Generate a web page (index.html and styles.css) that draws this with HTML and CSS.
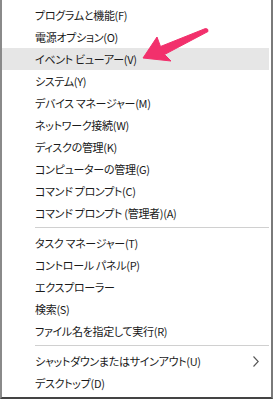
FILE: index.html
```html
<!DOCTYPE html>
<html lang="ja">
<head>
<meta charset="utf-8">
<link rel="stylesheet" href="styles.css">
</head>
<body>
<div class="menu">
  <ul class="list">
    <li class="item">プログラムと機能(F)</li>
    <li class="item">電源オプション(O)</li>
    <li class="item active">イベント ビューアー(V)</li>
    <li class="item">システム(Y)</li>
    <li class="item">デバイス マネージャー(M)</li>
    <li class="item">ネットワーク接続(W)</li>
    <li class="item">ディスクの管理(K)</li>
    <li class="item">コンピューターの管理(G)</li>
    <li class="item">コマンド プロンプト(C)</li>
    <li class="item">コマンド プロンプト (管理者)(A)</li>
    <li class="sep"></li>
    <li class="item">タスク マネージャー(T)</li>
    <li class="item">コントロール パネル(P)</li>
    <li class="item">エクスプローラー</li>
    <li class="item">検索(S)</li>
    <li class="item">ファイル名を指定して実行(R)</li>
    <li class="sep"></li>
    <li class="item sub">シャットダウンまたはサインアウト(U)<svg class="chev" width="6" height="11" viewBox="0 0 6 11"><path d="M0.5 0.5 L5.2 5.5 L0.5 10.5" fill="none" stroke="#555" stroke-width="1.1"/></svg></li>
    <li class="item">デスクトップ(D)</li>
  </ul>
  <svg class="arrow" width="273" height="399" viewBox="0 0 273 399">
    <path d="M143 58 L157 37 L160.5 46.5 L205.5 28.5 Q208.5 28.5 208 31.5 L164.5 54.5 L171 61 Z" fill="#f2306c" stroke="#f2306c" stroke-width="1" stroke-linejoin="round"/>
  </svg>
</div>
</body>
</html>
```
FILE: styles.css
```css
html, body {
  margin: 0;
  padding: 0;
  background: #fff;
}
.menu {
  position: relative;
  width: 273px;
  height: 399px;
  box-sizing: border-box;
  border-left: 2px solid #8a8a8a;
  border-right: 2px solid #7a7a7a;
  border-bottom: 2px solid #444;
  background: #fff;
  font-family: "Noto Sans CJK JP", "Noto Sans", sans-serif;
  font-size: 11px;
  letter-spacing: -0.3px;
  font-feature-settings: "palt";
  color: #1a1a1a;
}
.list {
  list-style: none;
  margin: 0 2px 0 0;
  padding: 4px 0 0 0;
}
.item {
  height: 22px;
  line-height: 22px;
  padding-left: 33px;
  padding-right: 10px;
  display: flex;
  align-items: center;
  white-space: nowrap;
}
.item.active {
  background: #e6e6e6;
}
.sub {
  justify-content: space-between;
}
.chev {
  display: block;
}
.sep {
  height: 1px;
  background: #d0d0d0;
  margin: 3px 0 4px 33px;
}
.arrow {
  position: absolute;
  left: -2px;
  top: 0;
  pointer-events: none;
}
```
